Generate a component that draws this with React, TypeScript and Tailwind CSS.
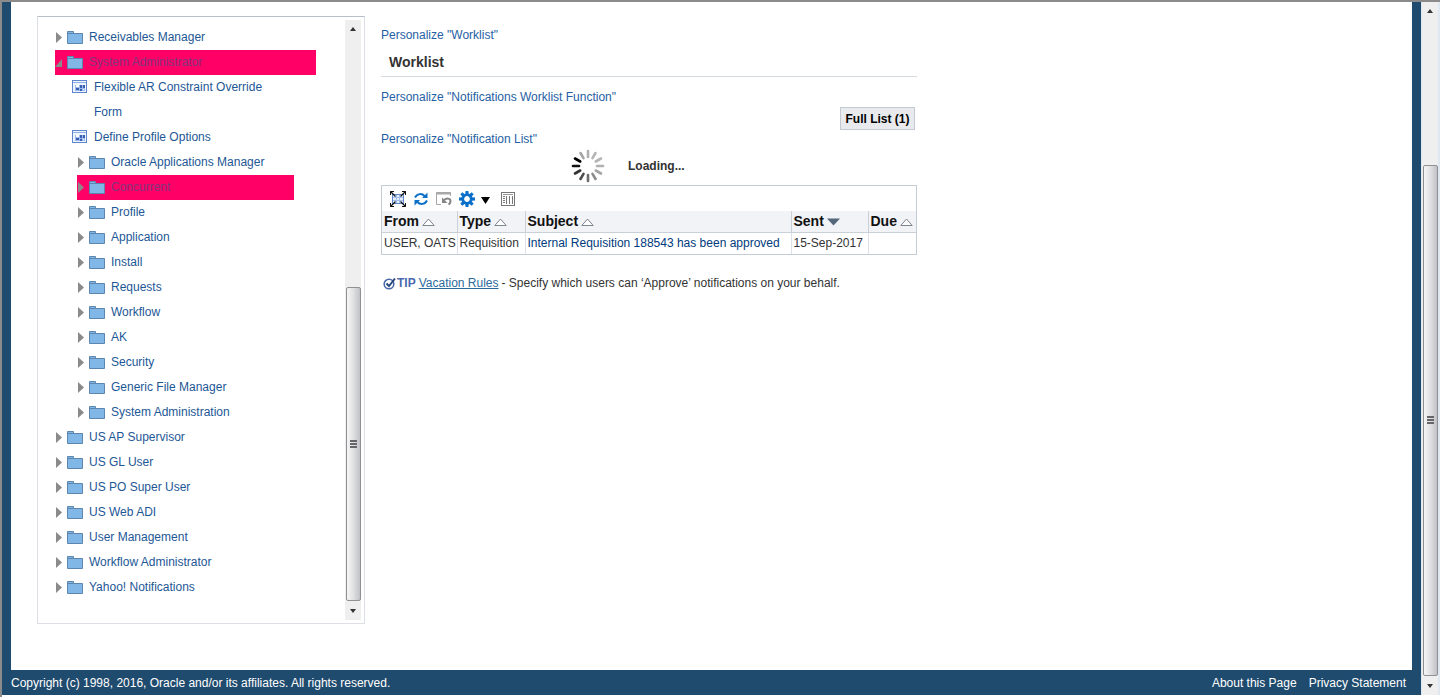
import React from "react";

type Node = { label: string; open?: boolean; marked?: boolean; level?: number; form?: boolean };

const nodes: Node[] = [
  { label: "Receivables Manager" },
  { label: "System Administrator", open: true, marked: true },
  { label: "Flexible AR Constraint Override Form", form: true },
  { label: "Define Profile Options", form: true },
  { label: "Oracle Applications Manager", level: 1 },
  { label: "Concurrent", level: 1, marked: true },
  { label: "Profile", level: 1 },
  { label: "Application", level: 1 },
  { label: "Install", level: 1 },
  { label: "Requests", level: 1 },
  { label: "Workflow", level: 1 },
  { label: "AK", level: 1 },
  { label: "Security", level: 1 },
  { label: "Generic File Manager", level: 1 },
  { label: "System Administration", level: 1 },
  { label: "US AP Supervisor" },
  { label: "US GL User" },
  { label: "US PO Super User" },
  { label: "US Web ADI" },
  { label: "User Management" },
  { label: "Workflow Administrator" },
  { label: "Yahoo! Notifications" },
];

function FolderIcon() {
  return (
    <svg width="17" height="16" viewBox="0 0 17 16" className="shrink-0" aria-hidden="true">
      <path d="M.5 13.500V1.500H6.500V3.500H15.500V13.500Z" fill="#80b7e6" stroke="#5c86ad" />
      <path d="M1 3.500H6.500" stroke="#5c86ad" />
    </svg>
  );
}

function FormIcon() {
  return (
    <svg width="15" height="13" viewBox="0 0 15 13" className="mt-[5px] shrink-0" aria-hidden="true">
      <rect x=".5" y=".5" width="14" height="12" fill="#eef4fd" stroke="#5f86cc" />
      <path d="M1 2.500H14" stroke="#8fb0e8" />
      <rect x="3" y="5" width="10" height="6" fill="#9dbaf0" />
      <path d="M8 5h2v3H8zM4 8h3v2H4zM11 5h2v3h-2zM8 9h2v2H8z" fill="#3a5fb0" />
      <path d="M4 5h3v2H4zM11 9h1v1h-1z" fill="#fff" />
    </svg>
  );
}

function TreeItem({ node }: { node: Node }) {
  if (node.form) {
    return (
      <li className="flex w-60 gap-[7px] pl-[17px]">
        <FormIcon />
        <a href="#form" className="w-44">{node.label}</a>
      </li>
    );
  }
  const indent = node.level ? "ml-[22px]" : "";
  const mark = node.marked ? "bg-[#ff0066] text-[#82357c]" : "";
  const width = node.level ? "w-[217px]" : "w-[261px]";
  return (
    <li className={`flex items-center ${indent} ${mark} ${width}`}>
      <button type="button" aria-label={`Toggle ${node.label}`} className="flex h-[25px] w-3 shrink-0 items-center">
        <svg width="9" height="14" viewBox="0 0 9 14" aria-hidden="true">
          <path d={node.open ? "M7 3V11H0Z" : "M1 1L7 6.500L1 12Z"} fill="#8a8a8a" />
        </svg>
      </button>
      <FolderIcon />
      <a href="#node" className="ml-[5px]">{node.label}</a>
    </li>
  );
}

function Arrow({ up }: { up?: boolean }) {
  return (
    <svg width="8" height="5" viewBox="0 0 8 5" aria-hidden="true">
      <path d={up ? "M4 0L7 4H1Z" : "M1 0H7L4 4Z"} fill="#333" />
    </svg>
  );
}

function ScrollRail({ before, thumb }: { before: string; thumb: string }) {
  return (
    <div className="flex h-full w-4 shrink-0 flex-col items-center bg-[#efefef]" aria-hidden="true">
      <div className="flex h-[18px] shrink-0 items-center"><Arrow up /></div>
      <div className={before} />
      <div className={`flex w-[15px] flex-col items-center justify-center gap-px rounded-xs border border-[#8f8f94] bg-linear-to-r from-[#f6f6f6] via-[#e0e0e2] to-[#c0c1c7] ${thumb}`}>
        <i className="h-0.5 w-[7px] bg-[#66666a]" />
        <i className="h-0.5 w-[7px] bg-[#66666a]" />
        <i className="h-0.5 w-[7px] bg-[#66666a]" />
      </div>
      <div className="flex h-[19px] shrink-0 items-center pt-0.5"><Arrow /></div>
    </div>
  );
}

function Spinner() {
  const shades = ["#b0b0b0", "#b4b4b4", "#b4b4b4", "#b0b0b0", "#a4a4a4", "#8c8c8c", "#6c6c6c", "#4c4c4c", "#333", "#111", "#000", "#a4a4a4"];
  return (
    <svg width="34" height="34" viewBox="-17 -17 34 34" aria-hidden="true">
      {shades.map((c, i) => (
        <path key={i} d="M0 -9V-15" stroke={c} strokeWidth="2.600" strokeLinecap="round" transform={`rotate(${i * 30})`} />
      ))}
    </svg>
  );
}

function DetachIcon() {
  return (
    <svg width="16" height="16" viewBox="0 0 16 16" fill="none" aria-hidden="true">
      <rect x="2.500" y="3.500" width="11" height="9" fill="#e6effc" stroke="#5f86cc" />
      <path d="M3 6.500H13M3 9.500H13M6.500 4V12M9.500 4V12" stroke="#a3bdea" />
      <path d="M.5 4V.5H4M12 .5H15.500V4M.5 12V15.500H4M12 15.500H15.500V12" stroke="#111" />
      <path d="M.5 .5L5.500 5.500M15.500 .5L10.500 5.500M.5 15.500L5.500 10.500M15.500 15.500L10.500 10.500" stroke="#111" strokeWidth="1.300" />
    </svg>
  );
}

function RefreshIcon() {
  return (
    <svg width="14" height="14" viewBox="0 0 14 14" fill="none" aria-hidden="true">
      <path d="M1 5.500C3 1.500 8 1 10.500 4M13 8.500C11 12.500 6 13 3.500 10" stroke="#0a6fc8" strokeWidth="2" />
      <path d="M13.500 .5V6H8ZM.5 13.500V8H6Z" fill="#0a6fc8" />
    </svg>
  );
}

function ResetIcon() {
  return (
    <svg width="16" height="14" viewBox="0 0 16 14" fill="none" aria-hidden="true">
      <path d="M5 12.500H.5V.5H14.500V4" stroke="#a8a8a8" />
      <path d="M0 1.500H15" stroke="#a8a8a8" strokeWidth="2" />
      <path d="M7 9C10 5.500 15 6 14.500 9.500C14.300 11 13.500 12 12.500 12.500" stroke="#858585" strokeWidth="2" />
      <path d="M6 5.500V11H11.500Z" fill="#858585" />
    </svg>
  );
}

function GearIcon() {
  return (
    <svg width="16" height="16" viewBox="-8 -8 16 16" aria-hidden="true">
      {[0, 45, 90, 135, 180, 225, 270, 315].map((a) => (
        <path key={a} d="M-1.800 -4.500L-1.400 -8H1.400L1.800 -4.500Z" fill="#0a6fc8" transform={`rotate(${a})`} />
      ))}
      <circle r="4.200" fill="#fff" stroke="#0a6fc8" strokeWidth="2.600" />
    </svg>
  );
}

function ColumnsIcon() {
  return (
    <svg width="14" height="14" viewBox="0 0 14 14" fill="none" aria-hidden="true">
      <rect x=".5" y=".5" width="13" height="13" stroke="#777" />
      <path d="M2 2.500H12" stroke="#999" />
      <path d="M3 4V12" stroke="#777" strokeWidth="2" strokeDasharray="1 1" />
      <path d="M5.500 4V12M8.500 4V12M11.500 4V12" stroke="#777" />
    </svg>
  );
}

function SortIcon({ desc }: { desc?: boolean }) {
  return (
    <svg width="13" height="8" viewBox="0 0 13 8" className="mb-0.5 ml-[3px] inline-block" aria-hidden="true">
      {desc ? <path d="M0 .5H13L6.500 7.500Z" fill="#53667a" /> : <path d="M.8 7.500H12.200L6.500 1Z" fill="#fff" stroke="#6f7883" strokeWidth=".9" />}
    </svg>
  );
}

const columns = [
  { name: "From", width: "w-[75px]" },
  { name: "Type", width: "w-[68px]" },
  { name: "Subject", width: "w-[266px]" },
  { name: "Sent", width: "w-[77px]", desc: true },
  { name: "Due", width: "w-[48px]" },
];

function Notifications() {
  return (
    <div className="w-[536px] border border-[#c4cdd6]">
      <div className="flex h-[25px] items-center pl-2">
        <button type="button" aria-label="Detach" className="mr-2"><DetachIcon /></button>
        <button type="button" aria-label="Refresh" className="mr-2"><RefreshIcon /></button>
        <button type="button" aria-label="Reset" className="mr-[7px]"><ResetIcon /></button>
        <button type="button" aria-label="Settings" className="flex items-center gap-1.5">
          <GearIcon />
          <svg width="9" height="7" viewBox="0 0 9 7" className="mt-[3px]" aria-hidden="true"><path d="M0 0H9L4.500 7Z" /></svg>
        </button>
        <button type="button" aria-label="Columns" className="ml-[11px]"><ColumnsIcon /></button>
      </div>
      <table className="w-full table-fixed border-collapse text-left whitespace-nowrap">
        <thead>
          <tr className="h-[21px] border-b border-[#c9d0d8] bg-[#f1f3f7] text-sm/5 text-[#111]">
            {columns.map((c) => (
              <th key={c.name} className={`border-r border-[#c9d0d8] pl-0.5 font-bold last:border-r-0 ${c.width}`}>
                {c.name}<SortIcon desc={c.desc} />
              </th>
            ))}
          </tr>
        </thead>
        <tbody>
          <tr className="h-[22px] text-xs/5 text-[#333]">
            <td className="border-r border-[#dde2e8] pl-0.5 align-top">USER, OATS</td>
            <td className="border-r border-[#dde2e8] pl-0.5 align-top">Requisition</td>
            <td className="border-r border-[#dde2e8] pl-0.5 align-top"><a href="#item" className="text-[#003a7c]">Internal Requisition 188543 has been approved</a></td>
            <td className="border-r border-[#dde2e8] pl-0.5 align-top">15-Sep-2017</td>
            <td />
          </tr>
        </tbody>
      </table>
    </div>
  );
}

export default function App() {
  return (
    <div className="flex h-screen min-h-[697px] flex-col border-t-2 border-l-2 border-[#8b8b8b] bg-white font-['Liberation_Sans',Arial,sans-serif] text-xs">
      <div className="flex min-h-0 flex-1">
        <div className="flex min-w-0 flex-1 flex-col bg-[#1f4b6e]">
          <div className="mr-[9px] ml-[9px] flex flex-1 items-start gap-4 bg-white pt-[14px] pl-[26px]">
            <nav aria-label="Navigator" className="flex h-[608px] w-[328px] shrink-0 justify-between border border-[#dcdfe5] border-t-[#b8bfca] py-[3px] pr-[3px] pl-[17px]">
              <ul className="pt-[5px] leading-[25px] text-[#1d5796]">
                {nodes.map((n) => <TreeItem key={n.label} node={n} />)}
              </ul>
              <ScrollRail before="flex-[250]" thumb="flex-[314]" />
            </nav>
            <main className="w-[536px] pt-3 text-[#333]">
              <a href="#p1" className="block leading-[15px] text-[#2660a4]">Personalize "Worklist"</a>
              <h1 className="mt-[7px] h-[27px] border-b border-[#d5dade] pl-2 text-sm/6 font-bold">Worklist</h1>
              <a href="#p2" className="mt-[13px] block leading-[15px] text-[#2660a4]">Personalize "Notifications Worklist Function"</a>
              <div className="mt-0.5 flex justify-end pr-0.5">
                <button type="button" className="h-[23px] w-[75px] border border-[#c3cad1] bg-[#e8eaed] font-bold text-black">Full List (1)</button>
              </div>
              <a href="#p3" className="mt-0.5 block leading-[15px] text-[#2660a4]">Personalize "Notification List"</a>
              <div className="flex h-[38px] items-center pl-[190px] font-bold"><Spinner /><span className="ml-[23px]">Loading...</span></div>
              <Notifications />
              <p className="mt-[21px] flex items-center pl-0.5 leading-[15px]">
                <svg width="13" height="13" viewBox="0 0 13 13" fill="none" aria-hidden="true">
                  <circle cx="6" cy="7" r="4.800" stroke="#4a69a8" strokeWidth="1.600" /><path d="M3.500 6.500L6 9L12 1.500" stroke="#27477e" strokeWidth="2" />
                </svg>
                <strong className="ml-px text-[#4a69b0]">TIP</strong>
                <a href="#rules" className="mx-[3px] text-[#2c6a9c] underline">Vacation Rules</a>
                <span>- Specify which users can ‘Approve’ notifications on your behalf.</span>
              </p>
            </main>
          </div>
          <footer className="flex h-[25px] items-center justify-between pr-[15px] pl-[9px] text-white">
            <span>Copyright (c) 1998, 2016, Oracle and/or its affiliates. All rights reserved.</span>
            <span className="flex gap-3"><a href="#about">About this Page</a><a href="#privacy">Privacy Statement</a></span>
          </footer>
        </div>
        <div className="flex border-r-2 border-l border-[#dfe8f0]"><ScrollRail before="flex-[146]" thumb="flex-[513]" /></div>
      </div>
      <div className="h-0.5 shrink-0 bg-white" />
    </div>
  );
}
